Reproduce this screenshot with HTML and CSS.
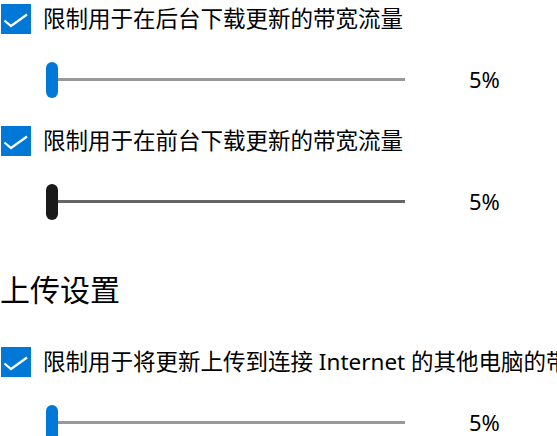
FILE: index.html
```html
<!DOCTYPE html>
<html lang="zh-CN">
<head>
  <meta charset="UTF-8">
  <meta name="viewport" content="width=device-width, initial-scale=1.0">
  <title>传递优化 - 高级选项</title>
  <link rel="stylesheet" href="styles.css">
</head>
<body>

<div class="page">

  <label class="option">
    <span class="box">
      <svg viewBox="0 0 30 30" width="30" height="30"><path d="M3.5 16.5 L10 22 L26 10.5" fill="none" stroke="#fff" stroke-width="2.2"/></svg>
    </span>
    <span class="text">限制用于在后台下载更新的带宽流量</span>
  </label>
  <div class="slider-row">
    <div class="slider">
      <div class="track"></div>
      <div class="thumb"></div>
    </div>
    <span class="value">5%</span>
  </div>

  <label class="option">
    <span class="box">
      <svg viewBox="0 0 30 30" width="30" height="30"><path d="M3.5 16.5 L10 22 L26 10.5" fill="none" stroke="#fff" stroke-width="2.2"/></svg>
    </span>
    <span class="text">限制用于在前台下载更新的带宽流量</span>
  </label>
  <div class="slider-row hover">
    <div class="slider">
      <div class="track"></div>
      <div class="thumb"></div>
    </div>
    <span class="value">5%</span>
  </div>

  <h2>上传设置</h2>

  <label class="option upload">
    <span class="box">
      <svg viewBox="0 0 30 30" width="30" height="30"><path d="M3.5 16.5 L10 22 L26 10.5" fill="none" stroke="#fff" stroke-width="2.2"/></svg>
    </span>
    <span class="text">限制用于将更新上传到连接 Internet 的其他电脑的带宽流量</span>
  </label>
  <div class="slider-row">
    <div class="slider">
      <div class="track"></div>
      <div class="thumb"></div>
    </div>
    <span class="value">5%</span>
  </div>

</div>

</body>
</html>
```

FILE: styles.css
```css
body { margin: 0; background-color: #ffffff; font-family: "Noto Sans", "Noto Sans CJK SC", sans-serif; color: #000; overflow: hidden; }
.page { width: 557px; height: 436px; overflow: hidden; padding-top: 4px; box-sizing: border-box; }

.option { display: flex; align-items: center; height: 30px; padding-left: 1px; margin-top: 28px; white-space: nowrap; }
.option:first-child { margin-top: 0; }
.option.upload { margin-top: 37px; }
.box { width: 30px; height: 30px; background-color: #0078d7; flex: none; display: block; }
.box svg { display: block; }
.text { margin-left: 12px; font-size: 22.5px; line-height: 30px; }

.slider-row { display: flex; align-items: center; height: 36px; margin-top: 28px; padding-left: 46px; }
.slider { position: relative; width: 359px; height: 36px; flex: none; }
.track { position: absolute; left: 0; right: 0; top: 16px; height: 3px; background-color: #999999; }
.thumb { position: absolute; left: 0; top: 0; width: 12px; height: 36px; border-radius: 6px; background-color: #0078d7; }
.slider-row.hover .track { background-color: #666666; }
.slider-row.hover .thumb { background-color: #1a1a1a; }
.value { margin-left: 64px; font-size: 22px; line-height: 30px; margin-top: -2px; }

h2 { margin: 50px 0 0 0; font-size: 30px; line-height: 40px; font-weight: normal; }
```
